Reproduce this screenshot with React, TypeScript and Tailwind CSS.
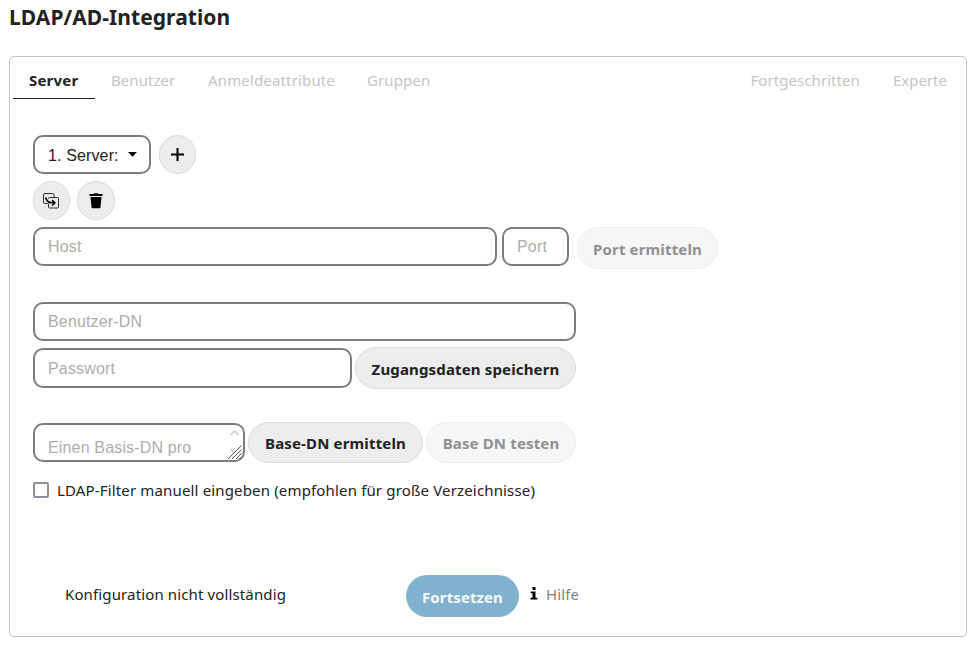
import type { ReactNode } from 'react';

const tabsLeft = [
  { label: 'Benutzer', cls: 'ml-[16px] w-[97px] tracking-[0.05px]' },
  { label: 'Anmeldeattribute', cls: 'w-[159px] tracking-[0.15px]' },
  { label: 'Gruppen', cls: 'tracking-[0.1px]' },
];

function Field({ text, className }: { text: string; className: string }) {
  return (
    <div
      className={`box-border flex shrink-0 items-center rounded-[10px] border-2 border-[#7d7d7d] bg-white pl-[13px] font-['Liberation_Sans',Arial,sans-serif] text-[16px] tracking-[0.16px] text-[#adadad] ${className}`}
    >
      {text}
    </div>
  );
}

function Pill({ children, className, muted = false }: { children: ReactNode; className: string; muted?: boolean }) {
  return (
    <button
      className={`box-border flex shrink-0 items-center justify-center rounded-[21px] border text-[15px] font-bold tracking-[0.15px] whitespace-nowrap ${
        muted ? 'border-[#ededed] bg-[#f6f6f6] text-[#909090]' : 'border-[#dbdbdb] bg-[#ededed] text-[#222]'
      } ${className}`}
    >
      {children}
    </button>
  );
}

function Round({ children, className }: { children: ReactNode; className: string }) {
  return (
    <button
      className={`box-border flex h-[39px] shrink-0 items-center justify-center rounded-[20px] border border-[#dbdbdb] bg-[#ededed] ${className}`}
    >
      {children}
    </button>
  );
}

export default function App() {
  return (
    <div className="h-[647px] w-[976px] overflow-hidden bg-white pl-[9px] font-['Noto_Sans','Open_Sans',sans-serif] text-[15px] text-[#222]">
      <h2 className="flex h-[56px] items-start pt-[2px] text-[21px] leading-[30px] font-bold tracking-[0.06px]">LDAP/AD-Integration</h2>
      <section className="box-border flex h-[581px] w-[958px] flex-col rounded-[5px] border border-[#c4c4c4] pt-[7px] pl-[3px]">
        <nav className="flex h-[35px] leading-[33px] whitespace-nowrap text-[#c4c4c4]">
          <div className="box-border h-[35px] w-[82px] shrink-0 border-b border-[#222] pl-[16px] font-bold tracking-[0.2px] text-[#222]">Server</div>
          {tabsLeft.map((t) => (
            <div key={t.label} className={`shrink-0 ${t.cls}`}>
              {t.label}
            </div>
          ))}
          <div className="mr-[33px] ml-auto tracking-[0.07px]">Fortgeschritten</div>
          <div className="mr-[19px]">Experte</div>
        </nav>

        <div className="flex flex-col pl-[20px]">
          <div className="mt-[36px] flex gap-[8px]">
            <div className="box-border flex h-[39px] w-[118px] items-center rounded-[10px] border-2 border-[#7d7d7d] pl-[13px] font-['Liberation_Sans',Arial,sans-serif] text-[16px] tracking-[0.13px]">
              <span className="pt-[2px]">1. Server:</span>
              <svg className="ml-[9px]" width="9" height="5" viewBox="0 0 9 5">
                <path d="M0 0h9L4.5 4.7z" fill="#000" />
              </svg>
            </div>
            <Round className="w-[37px]">
              <svg className="-mt-px" width="13" height="13" viewBox="0 0 13 13" fill="none" stroke="#000" strokeWidth="2">
                <path d="M6.500 0v13M0 6.500h13" />
              </svg>
            </Round>
          </div>
          <div className="mt-[7px] flex gap-[7px]">
            <Round className="w-[37px]">
              <svg className="mr-px" width="16" height="16" viewBox="0 0 16 16" fill="none" stroke="#000">
                <path d="M5.500 10.500H2A1.500 1.500 0 0 1 .5 9V2A1.500 1.500 0 0 1 2 .5h7.500A1.500 1.500 0 0 1 11 2v2.500" strokeWidth=".8" />
                <path d="M5.500 6V5.500a1 1 0 0 1 1-1H14.500a1 1 0 0 1 1 1V14a1 1 0 0 1-1 1H6.500a1 1 0 0 1-1-1v-3" strokeWidth=".8" />
                <path d="M2.500 4.500C3.500 7.500 5.500 9.700 8.500 9.700h3" strokeWidth="1.700" />
                <path d="M9 7l3 2.700-3 2.700" strokeWidth="1.400" />
              </svg>
            </Round>
            <Round className="w-[38px]">
              <svg width="14" height="16" viewBox="0 0 14 16" fill="#000">
                <path d="M4.500 1 5.200.3h3.600l.7.700H13.500v2H.5V1zM1.500 4h11l-1 10.200q-.1 1-1.100 1H3.600q-1 0-1.100-1z" />
              </svg>
            </Round>
          </div>
          <div className="mt-[7px] flex h-[42px] items-start">
            <Field text="Host" className="h-[39px] w-[464px]" />
            <Field text="Port" className="ml-[5px] h-[39px] w-[67px]" />
            <Pill muted className="ml-[8px] h-[42px] w-[141px] pt-[3px]">Port ermitteln</Pill>
          </div>
          <Field text="Benutzer-DN" className="mt-[33px] h-[39px] w-[543px]" />
          <div className="mt-[6px] flex h-[42px] items-start">
            <Field text="Passwort" className="mt-px h-[40px] w-[319px] pt-[2px]" />
            <Pill className="ml-[3px] h-[42px] w-[221px] pt-[3px]">Zugangsdaten speichern</Pill>
          </div>
          <div className="mt-[33px] flex h-[41px] items-start">
            <div className="relative mt-px">
              <Field text="Einen Basis-DN pro" className="h-[39px] w-[212px] pt-[11px]" />
              <svg className="absolute top-[6px] right-[2px]" width="16" height="32" viewBox="0 0 16 32" fill="none">
                <path d="M3.500 6 7.500 2l4 4M3.500 20l4 4" stroke="#d4d4d4" strokeWidth="1.800" />
                <path d="M1 30 14.500 16.500M5 30l9.500-9.500M9 30l5.500-5.500M12.500 30l2-2" stroke="#555" />
              </svg>
            </div>
            <Pill className="ml-[3px] h-[41px] w-[175px] pt-[2px]">Base-DN ermitteln</Pill>
            <Pill muted className="ml-[3px] h-[41px] w-[150px] pt-[2px]">Base DN testen</Pill>
          </div>
          <label className="mt-[18px] flex h-[18px] items-center whitespace-nowrap">
            <span className="mr-[8px] mb-px box-border block size-[16px] shrink-0 rounded-[2px] border-2 border-[#8f8f9d]" />
            <span className="tracking-[0.155px]">LDAP-Filter manuell eingeben (empfohlen für große Verzeichnisse)</span>
          </label>
          <div className="mt-[76px] flex h-[42px] items-start whitespace-nowrap">
            <span className="ml-[32px] w-[341px] leading-[39px] tracking-[0.13px]">Konfiguration nicht vollständig</span>
            <button className="box-border flex h-[42px] w-[113px] items-center justify-center rounded-[21px] bg-[#80b2d0] pt-[3px] font-bold tracking-[0.1px] text-[#f7fafc]">Fortsetzen</button>
            <svg className="mt-[12px] ml-[11px]" width="8" height="13" viewBox="0 0 8 13" fill="#000">
              <path d="M2.500 0h3v3h-3zM.7 4.500h4.800v6.300h1.800v1.700H.5v-1.700h2V6.200H.7z" />
            </svg>
            <span className="ml-[8px] leading-[39px] tracking-[0.1px] text-[#7f7f7f]">Hilfe</span>
          </div>
        </div>
      </section>
    </div>
  );
}
